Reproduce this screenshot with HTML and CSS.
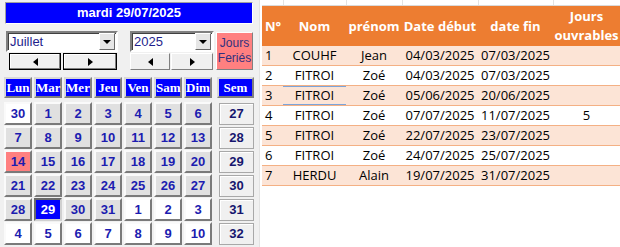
FILE: index.html
```html
<!DOCTYPE html>
<html lang="fr">
<head>
  <meta charset="UTF-8">
  <title>Calendrier des congés</title>
  <link rel="stylesheet" href="styles.css">
</head>
<body>
  <div class="page">
    <div class="panel">
      <div class="title">mardi 29/07/2025</div>

      <div class="controls">
        <div class="picker month">
          <div class="select"><span>Juillet</span><span class="drop"><i class="tri-down"></i></span></div>
          <div class="steps">
            <span class="step"><i class="tri-left"></i></span>
            <span class="step"><i class="tri-right"></i></span>
          </div>
        </div>
        <div class="picker year">
          <div class="select"><span>2025</span><span class="drop"><i class="tri-down"></i></span></div>
          <div class="steps">
            <span class="step"><i class="tri-left"></i></span>
            <span class="step"><i class="tri-right"></i></span>
          </div>
        </div>
        <div class="feries">Jours<br>Feriés</div>
      </div>

      <div class="days-head">
        <span>Lun</span><span>Mar</span><span>Mer</span><span>Jeu</span><span>Ven</span><span>Sam</span><span>Dim</span>
        <span class="sem">Sem</span>
      </div>

      <div class="days">
        <span class="out">30</span><span>1</span><span>2</span><span>3</span><span>4</span><span>5</span><span>6</span><span class="week">27</span>
        <span>7</span><span>8</span><span>9</span><span>10</span><span>11</span><span>12</span><span>13</span><span class="week">28</span>
        <span class="holiday">14</span><span>15</span><span>16</span><span>17</span><span>18</span><span>19</span><span>20</span><span class="week">29</span>
        <span>21</span><span>22</span><span>23</span><span>24</span><span>25</span><span>26</span><span>27</span><span class="week">30</span>
        <span>28</span><span class="today">29</span><span>30</span><span>31</span><span class="out">1</span><span class="out">2</span><span class="out">3</span><span class="week">31</span>
        <span class="out">4</span><span class="out">5</span><span class="out">6</span><span class="out">7</span><span class="out">8</span><span class="out">9</span><span class="out">10</span><span class="week">32</span>
      </div>
    </div>

    <div class="sheet">
      <table>
        <colgroup>
          <col style="width:21px"><col style="width:63px"><col style="width:56px">
          <col style="width:76px"><col style="width:75px"><col style="width:67px">
        </colgroup>
        <tr class="grid"><td></td><td></td><td></td><td></td><td></td><td></td></tr>
        <tr class="head">
          <th class="num">N°</th><th>Nom</th><th>prénom</th><th>Date début</th><th>date fin</th><th class="two">Jours<br>ouvrables</th>
        </tr>
        <tr><td class="num">1</td><td>COUHF</td><td>Jean</td><td>04/03/2025</td><td>07/03/2025</td><td></td></tr>
        <tr><td class="num">2</td><td>FITROI</td><td>Zoé</td><td>04/03/2025</td><td>07/03/2025</td><td></td></tr>
        <tr><td class="num">3</td><td class="sel">FITROI</td><td>Zoé</td><td>05/06/2025</td><td>20/06/2025</td><td></td></tr>
        <tr><td class="num">4</td><td>FITROI</td><td>Zoé</td><td>07/07/2025</td><td>11/07/2025</td><td>5</td></tr>
        <tr><td class="num">5</td><td>FITROI</td><td>Zoé</td><td>22/07/2025</td><td>23/07/2025</td><td></td></tr>
        <tr><td class="num">6</td><td>FITROI</td><td>Zoé</td><td>24/07/2025</td><td>25/07/2025</td><td></td></tr>
        <tr><td class="num">7</td><td>HERDU</td><td>Alain</td><td>19/07/2025</td><td>31/07/2025</td><td></td></tr>
      </table>
    </div>
  </div>
</body>
</html>
```

FILE: styles.css
```css
body {
  margin: 0;
  background: #fff;
  font-family: "Liberation Sans", Arial, sans-serif;
}

.page {
  display: flex;
  width: 620px;
  height: 247px;
  overflow: hidden;
}

/* left panel: calendar form */

.panel {
  width: 259px;
  height: 247px;
  background: #f0f0f0;
  border-right: 1px solid #e2e2e2;
  flex-shrink: 0;
}

.title {
  margin: 2px 6px 0 5px;
  height: 20px;
  line-height: 20px;
  background: #0000ff;
  color: #fff;
  font-weight: bold;
  font-size: 13px;
  text-align: center;
  border: 1px solid;
  border-color: #a0a0a0 #fff #fff #a0a0a0;
}

.controls {
  display: flex;
  margin: 7px 0 0 6px;
  height: 39px;
}

.picker {
  display: flex;
  flex-direction: column;
}

.month {
  width: 112px;
}

.year {
  width: 84px;
  margin-left: 12px;
}

.select {
  display: flex;
  align-items: center;
  justify-content: space-between;
  height: 17px;
  background: #fff;
  border: 2px solid;
  border-color: #808080 #fff #fff #808080;
  box-shadow: inset 1px 1px #404040;
  font-size: 13px;
  color: #1e1e8c;
  padding-left: 2px;
}

.drop {
  display: flex;
  align-items: center;
  justify-content: center;
  width: 14px;
  height: 15px;
  margin-right: 1px;
  background: #e6e6e6;
  border: 1px solid;
  border-color: #fff #696969 #696969 #fff;
}

.tri-down {
  border-left: 4px solid transparent;
  border-right: 4px solid transparent;
  border-top: 4px solid #000;
}

.tri-left {
  border-top: 4px solid transparent;
  border-bottom: 4px solid transparent;
  border-right: 5px solid #000;
}

.tri-right {
  border-top: 4px solid transparent;
  border-bottom: 4px solid transparent;
  border-left: 5px solid #000;
}

.steps {
  display: flex;
  gap: 2px;
  margin-top: 1px;
  height: 17px;
}

.step {
  display: flex;
  align-items: center;
  justify-content: center;
  box-sizing: border-box;
  height: 17px;
  background: #f0f0f0;
  border: 1px solid;
  border-color: #fff #808080 #808080 #fff;
}

.month .step {
  border: 1px solid #000;
  box-shadow: inset -1px -1px #808080, inset 1px 1px #fff;
}

.month .step:first-child {
  width: 52px;
  margin-left: 3px;
}

.month .step:last-child {
  width: 54px;
}

.year .steps {
  gap: 1px;
}

.year .step:first-child {
  width: 40px;
}

.year .step:last-child {
  width: 42px;
}

.feries {
  box-sizing: border-box;
  width: 37px;
  height: 38px;
  margin: 1px 0 0 2px;
  padding-top: 3px;
  background: #ff8080;
  border: 1px solid;
  border-color: #fff #808080 #808080 #fff;
  color: #32307e;
  font-size: 12px;
  line-height: 15px;
  text-align: center;
}

/* calendar grid */

.days-head,
.days {
  display: grid;
  grid-template-columns: repeat(7, 28px) 40px;
  column-gap: 2px;
  margin-left: 4px;
}

.days-head {
  margin-top: 7px;
  grid-auto-rows: 21px;
}

.days-head span {
  box-sizing: border-box;
  background: #0000ff;
  color: #fff;
  font-family: "Liberation Serif", "Times New Roman", serif;
  font-weight: bold;
  font-size: 13px;
  line-height: 17px;
  text-align: center;
  border: 2px solid;
  border-color: #d8d8d8 #808080 #808080 #d8d8d8;
}

.days-head .sem {
  width: 37px;
  justify-self: end;
}

.days {
  margin-top: 4px;
  grid-auto-rows: 23px;
  row-gap: 1px;
}

.days span {
  box-sizing: border-box;
  background: #e0e0e0;
  color: #1c1cb0;
  font-weight: bold;
  font-size: 13px;
  line-height: 19px;
  text-align: center;
  border: 2px solid;
  border-color: #fafafa #7a7a7a #7a7a7a #fafafa;
}

.days .out {
  background: #fff;
}

.days .holiday {
  background: #ff8080;
}

.days .today {
  background: #0000ff;
  color: #fff;
  border-color: #6a6a6a #d0d0d0 #d0d0d0 #6a6a6a;
}

.days .week {
  width: 35px;
  height: 22px;
  justify-self: end;
  margin-top: 1px;
  background: #f0f0f0;
  color: #16166e;
  border: 1px solid #a8a8a8;
  box-shadow: inset 1px 1px #fff;
  line-height: 20px;
}

/* right side: spreadsheet */

.sheet {
  flex: 1;
  background: #fff;
}

table {
  border-collapse: collapse;
  table-layout: fixed;
  width: 358px;
  margin-left: 2px;
  font-family: "Open Sans", sans-serif;
  font-size: 13px;
  color: #000;
}

td,
th {
  padding: 0;
  text-align: center;
  white-space: nowrap;
  overflow: hidden;
}

tr.grid td {
  height: 5px;
  border-right: 1px solid #e3e3e3;
  border-bottom: 1px solid #dadada;
}

tr.head th {
  height: 40px;
  background: #ed7d31;
  color: #fff;
  font-weight: bold;
}

tr.head th.two {
  line-height: 19px;
}

td {
  height: 19px;
  line-height: 19px;
  border-bottom: 1px solid #f4b084;
}

tr:nth-child(odd) td {
  background: #fce4d6;
}

tr.grid td {
  background: #fff;
}

.num {
  text-align: left;
  padding-left: 3px;
}

td.sel {
  box-shadow: inset 0 1px #7ba5dc, inset 0 -1px #7ba5dc;
}
```
